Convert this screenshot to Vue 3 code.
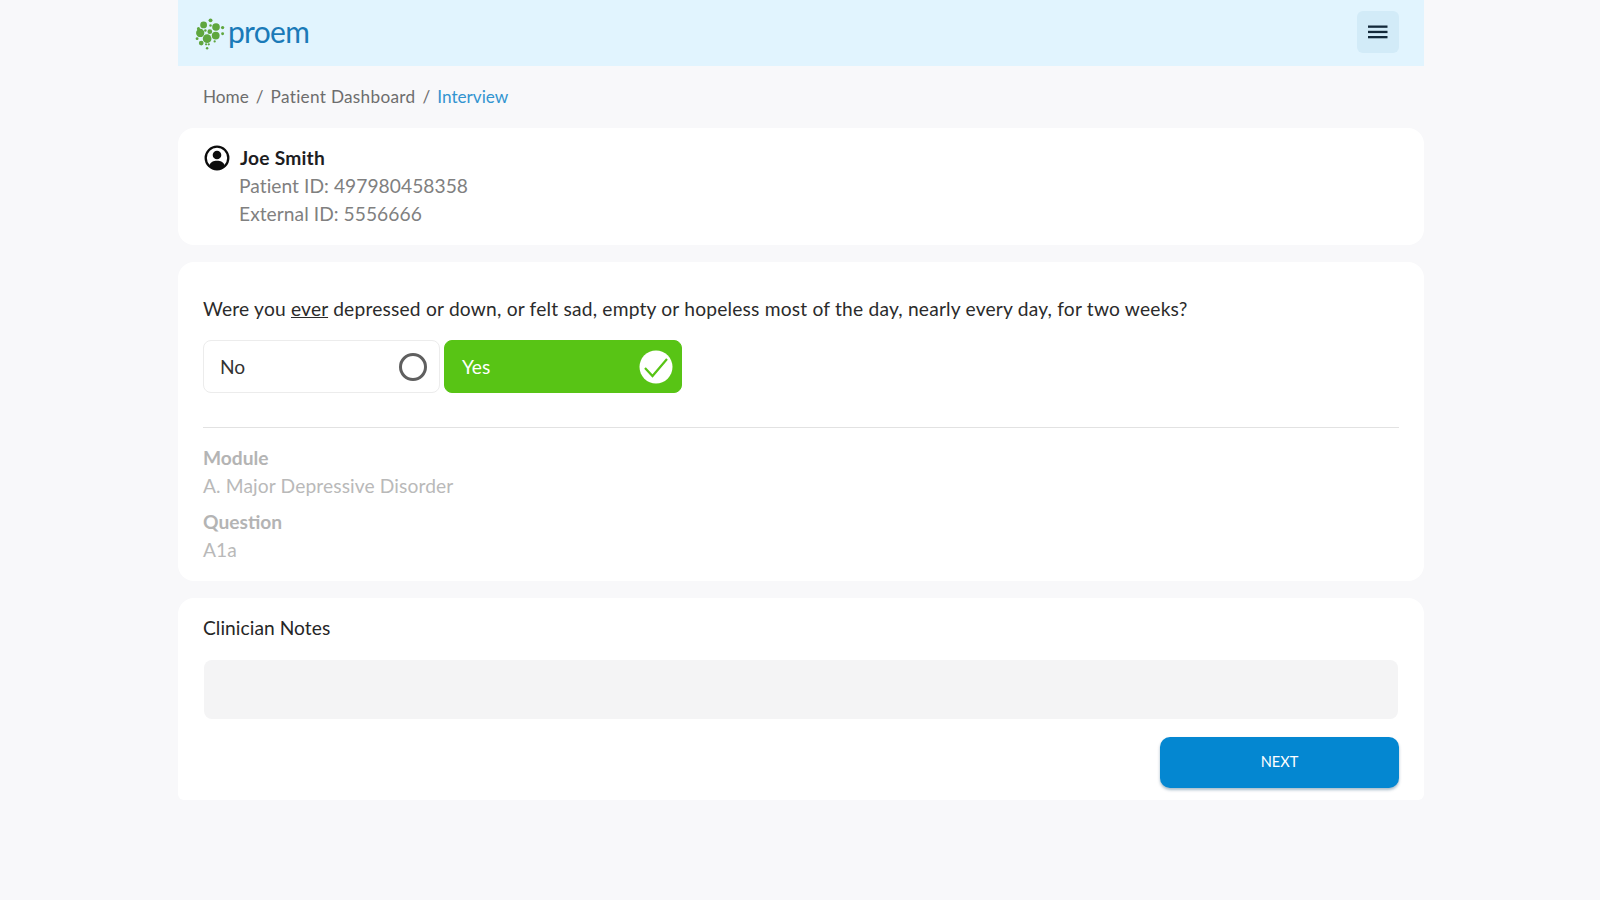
<script setup>
const dots = [
  [16,2.300,1.900],[9.300,6.700,3.300],[16,7.300,1.200],[21.300,8.700,3.700],[27.700,9.300,1.600],
  [4.300,10.300,1.500],[6,14.500,4],[15.300,13.300,2.300],[11,12,1.200],[21,17,3.800],
  [27.700,15.300,1.400],[12.700,20,4.200],[3,20,1.400],[7,24.300,2.300],[11.700,25.500,1.100],
  [14.300,25.500,1.100],[12.700,29.300,1.200],[20,22.700,1.100]
]
</script>

<template>
  <div class="page">
    <div class="shell">
      <header class="topbar">
        <div class="logo">
          <svg class="mark" width="31" height="32" viewBox="0 0 30 31">
            <circle v-for="(d, i) in dots" :key="i" :cx="d[0]" :cy="d[1]" :r="d[2]" fill="#5fa63e" />
          </svg>
          <span class="wordmark">proem</span>
        </div>
        <button class="menu" aria-label="Menu">
          <svg width="20" height="14" viewBox="0 0 20 14">
            <rect x="0" y="0.500" width="19.500" height="2.300" fill="#13293a" />
            <rect x="0" y="5.800" width="19.500" height="2.300" fill="#13293a" />
            <rect x="0" y="11" width="19.500" height="2.300" fill="#13293a" />
          </svg>
        </button>
      </header>

      <nav class="crumbs">
        <span>Home</span><span class="sep">/</span><span class="dash">Patient Dashboard</span><span class="sep">/</span><span class="current">Interview</span>
      </nav>

      <section class="card patient">
        <svg class="avatar" width="26" height="26" viewBox="0 0 26 26">
          <circle cx="13" cy="13" r="11.300" fill="#fff" stroke="#0c0c0c" stroke-width="2.300" />
          <circle cx="13" cy="10" r="4.300" fill="#0c0c0c" />
          <path d="M5.200 20.400C6.500 17 9.500 15.800 13 15.800s6.500 1.200 7.800 4.600A11 11 0 0 1 13 24a11 11 0 0 1-7.800-3.600z" fill="#0c0c0c" />
        </svg>
        <div class="pinfo">
          <div class="pname">Joe Smith</div>
          <div class="pline">Patient ID: 497980458358</div>
          <div class="pline">External ID: 5556666</div>
        </div>
      </section>

      <section class="card question">
        <p class="prompt">Were you <u>ever</u> depressed or down, or felt sad, empty or hopeless most of the day, nearly every day, for two weeks?</p>
        <div class="options">
          <div class="option">
            <span class="no">No</span>
            <span class="radio"></span>
          </div>
          <div class="option selected">
            <span>Yes</span>
            <svg width="34" height="34" viewBox="0 0 34 34">
              <circle cx="17" cy="17" r="16.500" fill="#fff" />
              <path d="M6 18l7.500 8L28 9" fill="none" stroke="#58c415" stroke-width="2.200" />
            </svg>
          </div>
        </div>
        <hr class="rule" />
        <div class="meta">
          <div class="mlabel">Module</div>
          <div class="mvalue">A. Major Depressive Disorder</div>
          <div class="mlabel second">Question</div>
          <div class="mvalue">A1a</div>
        </div>
      </section>

      <section class="card notes">
        <div class="ntitle">Clinician Notes</div>
        <div class="nbox"></div>
        <div class="actions">
          <button class="next">NEXT</button>
        </div>
      </section>
    </div>
  </div>
</template>

<style>
html, body { margin: 0; background: #f8f8fa; }
</style>

<style scoped>
.page {
  min-height: 900px;
  background: #f8f8fa;
  font-family: Lato, sans-serif;
  overflow: hidden;
}
.shell {
  width: 1246px;
  margin-left: 178px;
  display: flex;
  flex-direction: column;
}
.topbar {
  height: 66px;
  background: #e1f4fe;
  display: flex;
  align-items: center;
  justify-content: space-between;
  padding: 0 25px 0 16px;
}
.logo {
  display: flex;
  align-items: center;
  gap: 3px;
}
.mark { display: block; margin-top: 1px; }
.wordmark {
  font-size: 30px;
  line-height: 36px;
  letter-spacing: -0.700px;
  color: #1a7ab8;
  margin-top: -5px;
}
.menu {
  width: 42px;
  height: 42px;
  margin-top: -2px;
  border: 0;
  padding: 0;
  border-radius: 6px;
  background: #d2ebf8;
  display: flex;
  align-items: center;
  justify-content: center;
}
.crumbs {
  height: 62px;
  box-sizing: border-box;
  padding: 20px 25px 0;
  display: flex;
  gap: 7px;
  font-size: 17.200px;
  line-height: 22px;
  color: #6d6d6d;
}
.dash { letter-spacing: 0.300px; }
.current { color: #3294d0; }
.card {
  background: #fff;
  border-radius: 16px;
}
.patient {
  height: 117px;
  box-sizing: border-box;
  padding: 16px 25px 0 26px;
  display: flex;
  gap: 9px;
  margin-bottom: 17px;
}
.avatar { display: block; margin-top: 1px; }
.pname {
  font-size: 19.200px;
  line-height: 28px;
  font-weight: 700;
  color: #1d1d1f;
  letter-spacing: 0.200px;
  padding-left: 1px;
}
.pline {
  font-size: 19.200px;
  line-height: 28px;
  letter-spacing: 0.050px;
  color: #808080;
}
.question {
  height: 319px;
  box-sizing: border-box;
  padding: 34px 25px 0;
  margin-bottom: 17px;
}
.prompt {
  margin: 0;
  font-size: 19.200px;
  line-height: 26px;
  letter-spacing: 0.200px;
  color: #2b2b2b;
}
.options {
  display: flex;
  gap: 4px;
  margin-top: 18px;
}
.option {
  width: 237px;
  height: 53px;
  box-sizing: border-box;
  border: 1px solid #ececec;
  border-radius: 8px;
  padding: 0 12px 0 17px;
  display: flex;
  align-items: center;
  justify-content: space-between;
  font-size: 19.200px;
  color: #333;
}
.no { margin-left: -1px; }
.radio {
  width: 28px;
  height: 28px;
  box-sizing: border-box;
  border: 3px solid #5f5f5f;
  border-radius: 50%;
}
.selected {
  width: 238px;
  background: #58c415;
  border-color: #58c415;
  color: #fff;
  padding-right: 8px;
}
.rule {
  border: 0;
  height: 1px;
  background: #e2e2e2;
  margin: 34px 0 16px;
}
.mlabel {
  font-size: 19.200px;
  line-height: 28px;
  font-weight: 700;
  color: #b4b4b4;
}
.second { margin-top: 8px; }
.mvalue {
  font-size: 19.200px;
  line-height: 28px;
  letter-spacing: 0.120px;
  color: #b9b9b9;
}
.notes {
  height: 202px;
  box-sizing: border-box;
  padding: 16px 25px 0;
  border-radius: 16px 16px 6px 6px;
}
.ntitle {
  font-size: 19.200px;
  line-height: 28px;
  letter-spacing: 0.050px;
  color: #262626;
}
.nbox {
  height: 59px;
  margin: 18px 1px 0 1px;
  background: #f4f4f5;
  border-radius: 8px;
}
.actions {
  display: flex;
  justify-content: flex-end;
  margin-top: 18px;
}
.next {
  width: 239px;
  height: 51px;
  border: 0;
  border-radius: 10px;
  padding: 0 0 2px;
  background: #0487d1;
  color: #fff;
  font-family: inherit;
  font-size: 14.600px;
  box-shadow: 0 2px 3px rgba(0, 60, 100, 0.35);
}
</style>
